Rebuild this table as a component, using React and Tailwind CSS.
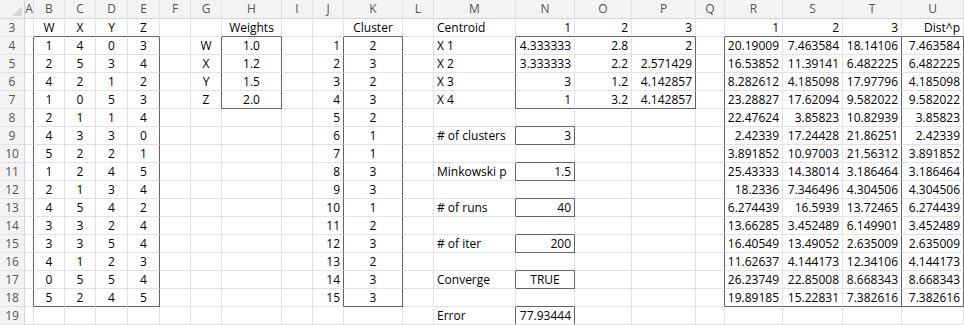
const COLS = ["A","B","C","D","E","F","G","H","I","J","K","L","M","N","O","P","Q","R","S","T","U"];

const DATA = [
  [1,4,0,3],[2,5,3,4],[4,2,1,2],[1,0,5,3],[2,1,1,4],[4,3,3,0],[5,2,2,1],[1,2,4,5],
  [2,1,3,4],[4,5,4,2],[3,3,2,4],[3,3,5,4],[4,1,2,3],[0,5,5,4],[5,2,4,5],
];
const CLUSTER = [2,3,2,3,2,1,1,3,3,1,2,3,2,3,3];
const DIST = [
  ["20.19009","7.463584","18.14106","7.463584"],
  ["16.53852","11.39141","6.482225","6.482225"],
  ["8.282612","4.185098","17.97796","4.185098"],
  ["23.28827","17.62094","9.582022","9.582022"],
  ["22.47624","3.85823","10.82939","3.85823"],
  ["2.42339","17.24428","21.86251","2.42339"],
  ["3.891852","10.97003","21.56312","3.891852"],
  ["25.43333","14.38014","3.186464","3.186464"],
  ["18.2336","7.346496","4.304506","4.304506"],
  ["6.274439","16.5939","13.72465","6.274439"],
  ["13.66285","3.452489","6.149901","3.452489"],
  ["16.40549","13.49052","2.635009","2.635009"],
  ["11.62637","4.144173","12.34106","4.144173"],
  ["26.23749","22.85008","8.668343","8.668343"],
  ["19.89185","15.22831","7.382616","7.382616"],
];

// build the sheet values
const cells = {};
const put = (r, c, v) => { cells[r] = cells[r] || {}; cells[r][c] = String(v); };

["W","X","Y","Z"].forEach((h, i) => put(3, "BCDE"[i], h));
put(3, "H", "Weights");
put(3, "K", "Cluster");
put(3, "M", "Centroid");
["N","O","P"].forEach((c, i) => put(3, c, i + 1));
["R","S","T"].forEach((c, i) => put(3, c, i + 1));
put(3, "U", "Dist^p");

DATA.forEach((row, i) => row.forEach((v, j) => put(4 + i, "BCDE"[j], v)));
CLUSTER.forEach((v, i) => { put(4 + i, "J", i + 1); put(4 + i, "K", v); });
DIST.forEach((row, i) => row.forEach((v, j) => put(4 + i, "RSTU"[j], v)));

[["W","1.0"],["X","1.2"],["Y","1.5"],["Z","2.0"]].forEach(([g, h], i) => { put(4 + i, "G", g); put(4 + i, "H", h); });

[
  ["X 1","4.333333","2.8","2"],
  ["X 2","3.333333","2.2","2.571429"],
  ["X 3","3","1.2","4.142857"],
  ["X 4","1","3.2","4.142857"],
].forEach(([m, n, o, p], i) => { put(4 + i, "M", m); put(4 + i, "N", n); put(4 + i, "O", o); put(4 + i, "P", p); });

put(9, "M", "# of clusters"); put(9, "N", 3);
put(11, "M", "Minkowski p"); put(11, "N", 1.5);
put(13, "M", "# of runs"); put(13, "N", 40);
put(15, "M", "# of iter"); put(15, "N", 200);
put(17, "M", "Converge"); put(17, "N", "TRUE");
put(19, "M", "Error"); put(19, "N", "77.93444");

// outlined ranges [r1, c1, r2, c2]
const ci = (c) => COLS.indexOf(c);
const BOXES = [
  [4,"B",18,"E"],[4,"H",7,"H"],[4,"K",18,"K"],[4,"N",7,"P"],
  [9,"N",9,"N"],[11,"N",11,"N"],[13,"N",13,"N"],[15,"N",15,"N"],[17,"N",17,"N"],[19,"N",20,"N"],
  [4,"R",18,"T"],[4,"U",18,"U"],
].map(([r1, c1, r2, c2]) => [r1, ci(c1), r2, ci(c2)]);

const darkRight = (r, c) =>
  BOXES.some(([r1, c1, r2, c2]) => r >= r1 && r <= r2 && (c === c2 || c + 1 === c1));
const darkBottom = (r, c) =>
  BOXES.some(([r1, c1, r2, c2]) => c >= c1 && c <= c2 && (r === r2 || r + 1 === r1));

const alignOf = (r, c) => {
  if (r === 17 && c === "N") return "justify-center";
  if ("BCDEGHK".includes(c)) return "justify-center";
  if (c === "M") return "justify-start";
  return "justify-end";
};

const ROWS = Array.from({ length: 17 }, (_, i) => i + 3);

export default function App() {
  return (
    <div
      className="w-[964px] h-[325px] overflow-hidden bg-white text-[12px] text-black"
      style={{ fontFamily: '"Open Sans", "Noto Sans", sans-serif' }}
    >
      <div className="grid grid-cols-[25px_9px_31px_31px_32px_32px_31px_31px_60px_31px_31px_59px_31px_82px_59px_57px_64px_29px_58px_60px_59px_62px]">
        {/* column headers */}
        <div className="h-[19px] bg-[#f3f3f3] border-r border-b border-[#d4d4d4] flex items-end justify-end p-[2px]">
          <svg width="10" height="10" viewBox="0 0 10 10">
            <polygon points="10,0 10,10 0,10" fill="#d6d6d6" />
          </svg>
        </div>
        {COLS.map((c) => (
          <div
            key={c}
            className="h-[19px] bg-[#f3f3f3] border-r border-b border-r-[#e2e2e2] border-b-[#d4d4d4] flex items-center justify-center text-[#555]"
          >
            {c}
          </div>
        ))}

        {ROWS.map((r) => (
          <div key={r} className="contents">
            <div className="h-[18px] bg-[#f3f3f3] border-r border-b border-r-[#d4d4d4] border-b-[#e2e2e2] flex items-center justify-center text-[#555]">
              {r}
            </div>
            {COLS.map((c, i) => {
              const v = cells[r]?.[c];
              return (
                <div
                  key={c}
                  className={
                    "h-[18px] border-r border-b flex items-center px-[3px] whitespace-nowrap overflow-visible " +
                    alignOf(r, c) + " " +
                    (darkRight(r, i) ? "border-r-[#636363]" : "border-r-[#e2e2e2]") + " " +
                    (darkBottom(r, i) ? "border-b-[#636363]" : "border-b-[#e2e2e2]")
                  }
                >
                  {v}
                </div>
              );
            })}
          </div>
        ))}
      </div>
    </div>
  );
}
